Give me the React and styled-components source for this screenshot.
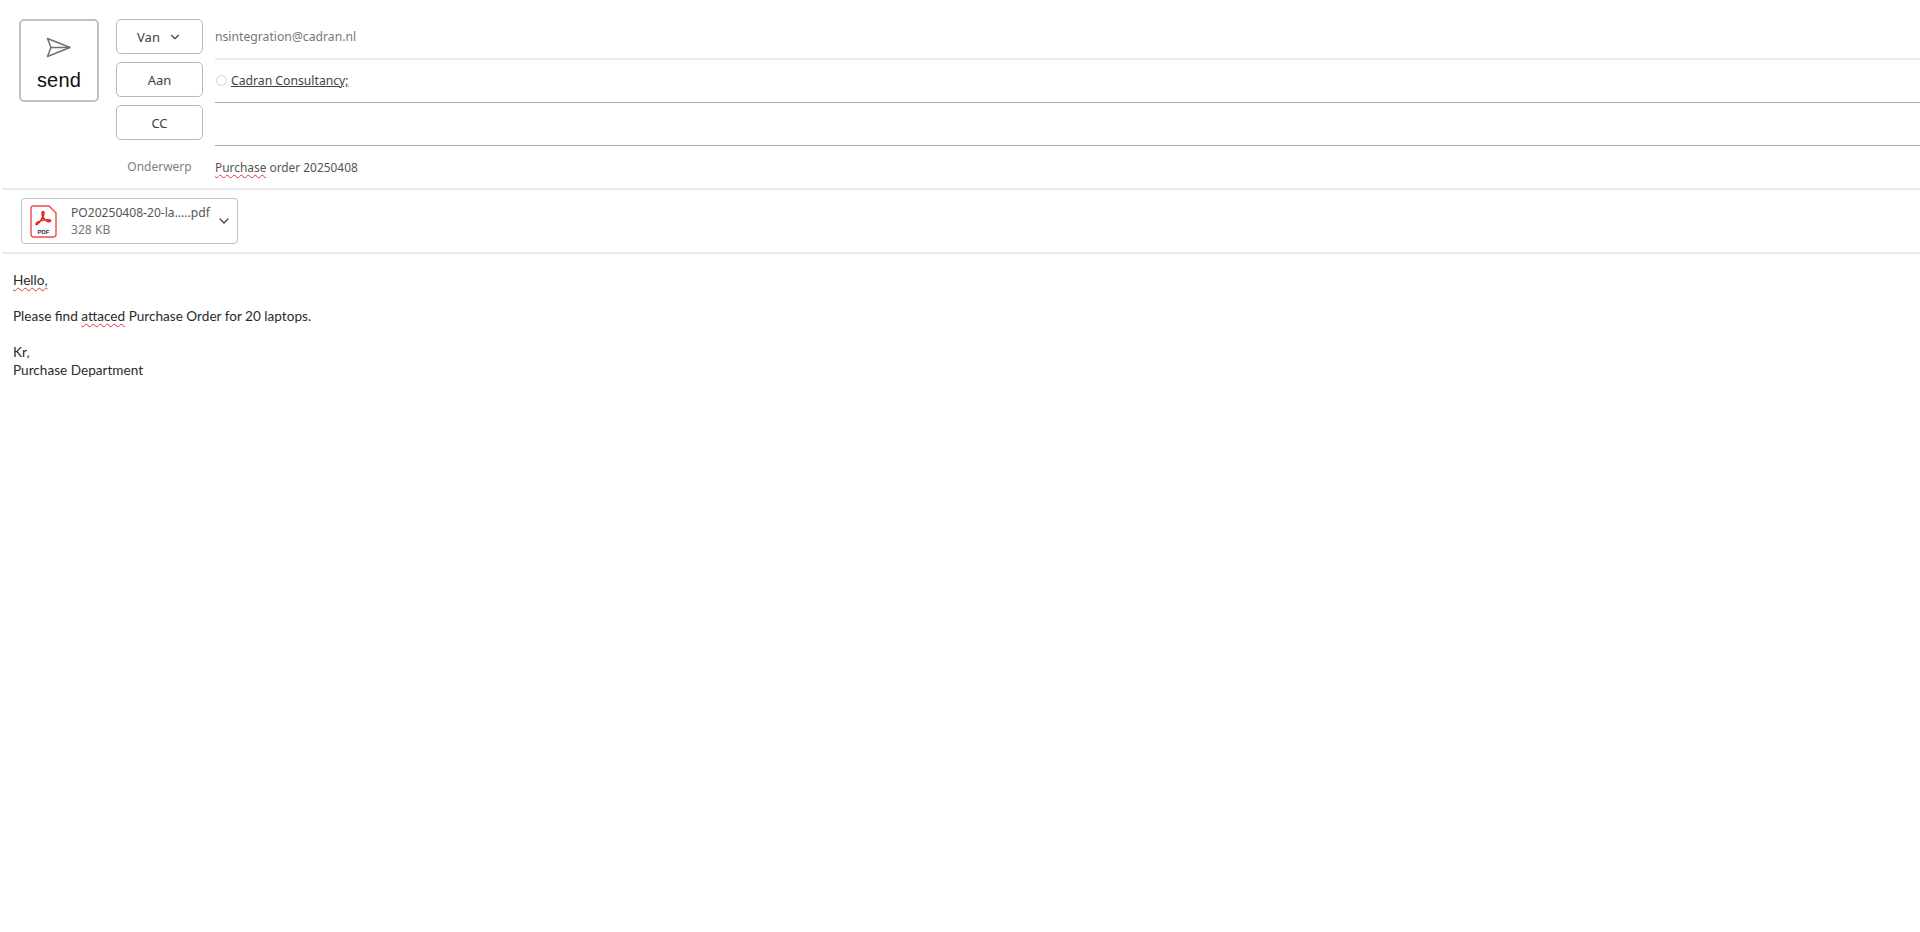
import React from "react";
import styled, { createGlobalStyle } from "styled-components";
import { ChevronDown } from "lucide-react";

const GlobalStyle = createGlobalStyle`
  html, body {
    margin: 0;
    padding: 0;
    background: #fff;
    font-family: "Noto Sans", "Liberation Sans", sans-serif;
    overflow: hidden;
  }
`;

const Page = styled.div`
  width: 1920px;
  height: 932px;
  background: #fff;
  padding-left: 2px;
  box-sizing: border-box;
`;

const Header = styled.div`
  display: flex;
  height: 190px;
  padding: 19px 0 0 17px;
  box-sizing: border-box;
  border-bottom: 2px solid #eaeaea;
`;

const SendButton = styled.div`
  width: 80px;
  height: 83px;
  box-sizing: border-box;
  border: 2px solid #c0c0c0;
  border-radius: 5px;
  display: flex;
  flex-direction: column;
  align-items: center;
  padding-top: 16px;
  margin-right: 17px;
  font-family: "Liberation Sans", sans-serif;
  font-size: 20px;
  line-height: 24px;
  letter-spacing: 0.2px;
  color: #111;
  svg {
    margin-bottom: 9px;
  }
`;

const Fields = styled.div`
  flex: 1;
  display: grid;
  grid-template-columns: 87px 1fr;
  grid-template-rows: 43px 43px 43px 43px;
  column-gap: 12px;
`;

const LabelCell = styled.div`
  display: flex;
  align-items: flex-start;
`;

const FieldButton = styled.div`
  width: 87px;
  height: 35px;
  box-sizing: border-box;
  border: 1.5px solid #b8b8b8;
  border-radius: 5px;
  display: flex;
  align-items: center;
  justify-content: center;
  gap: 7px;
  font-size: 13px;
  color: #404040;
  svg {
    margin-left: 1px;
  }
`;

const SubjectLabel = styled.div`
  width: 87px;
  height: 37px;
  display: flex;
  align-items: center;
  justify-content: center;
  font-size: 12px;
  color: #7f7f7f;
`;

const Value = styled.div`
  display: flex;
  align-items: center;
  gap: 4px;
  font-size: ${(p) => p.$size || 12.2}px;
  padding-bottom: ${(p) => p.$pad ?? 4}px;
  box-sizing: border-box;
  color: ${(p) => p.$color || "#555"};
  border-bottom: ${(p) => (p.$line ? `${p.$weight || 1}px solid ${p.$line}` : "none")};
  height: ${(p) => (p.$line ? "41px" : "37px")};
`;

const Presence = styled.span`
  width: 9px;
  height: 9px;
  border: 1.5px solid #c4d5de;
  border-radius: 50%;
  margin: 0 0 0 1px;
`;

const Recipient = styled.span`
  text-decoration: underline;
  color: #444;
`;

const Misspelled = styled.span`
  text-decoration: underline wavy #e0343c 1px;
  text-underline-offset: 2px;
`;

const AttachmentBar = styled.div`
  height: 64px;
  padding: 8px 0 0 19px;
  box-sizing: border-box;
  border-bottom: 2px solid #eaeaea;
`;

const Attachment = styled.div`
  width: 217px;
  height: 46px;
  box-sizing: border-box;
  border: 1.5px solid #c0c0c0;
  border-radius: 4px;
  display: flex;
  align-items: center;
  padding: 0 5px 0 8px;
`;

const FileInfo = styled.div`
  flex: 1;
  margin-left: 14px;
  font-size: 12.1px;
  line-height: 17px;
  color: #555;
`;

const FileSize = styled.div`
  color: #777;
`;

const Body = styled.div`
  padding: 17px 0 0 11px;
  font-family: "Lato", "Noto Sans", sans-serif;
  font-size: 13.6px;
  line-height: 18px;
  color: #2b2b2b;
`;

const Line = styled.p`
  margin: 0 0 ${(p) => p.$gap || 0}px;
`;

const SendIcon = () => (
  <svg width="26" height="22" viewBox="0 0 26 22" fill="none" stroke="#707070" strokeWidth="1.5" strokeLinejoin="round">
    <path d="M1.5 1.5 L24 10.5 L1.5 19.5 L5 10.5 Z" />
    <path d="M5 10.5 H24" />
  </svg>
);

const PdfIcon = () => (
  <svg width="27" height="33" viewBox="0 0 27 33" fill="none">
    <path d="M3 1 H19 L26 8 V29.5 A2.5 2.5 0 0 1 23.5 32 H3.5 A2.5 2.5 0 0 1 1 29.5 V3 A2 2 0 0 1 3 1 Z" fill="#fff" stroke="#ee4b45" strokeWidth="1.4" />
    <path d="M13 6.5 C11.6 6.5 11.8 9.5 13 12 C14 14 15.5 15.6 17.5 16.4 C20 17.2 21.5 15.6 20 15 C17.5 14.2 11 15 7.5 17.2 C5.2 18.8 6 20.5 7.8 19 C9.6 17.4 12.2 13.5 13.6 10 C14.4 8 14 6.5 13 6.5 Z" stroke="#e3241c" strokeWidth="1.6" />
    <text x="13.5" y="28.5" textAnchor="middle" fontSize="6" fontWeight="700" fontFamily="Liberation Sans, sans-serif" fill="#333">PDF</text>
  </svg>
);

export default function App() {
  return (
    <Page>
      <GlobalStyle />
      <Header>
        <SendButton>
          <SendIcon />
          send
        </SendButton>
        <Fields>
          <LabelCell>
            <FieldButton>
              Van <ChevronDown size={14} strokeWidth={2} />
            </FieldButton>
          </LabelCell>
          <Value $line="#ececec" $weight={2} $color="#777" $pad={5}>nsintegration@cadran.nl</Value>
          <LabelCell>
            <FieldButton>Aan</FieldButton>
          </LabelCell>
          <Value $line="#aaaaaa" $pad={3}>
            <Presence />
            <Recipient>Cadran Consultancy;</Recipient>
          </Value>
          <LabelCell>
            <FieldButton>CC</FieldButton>
          </LabelCell>
          <Value $line="#aaaaaa" />
          <LabelCell>
            <SubjectLabel>Onderwerp</SubjectLabel>
          </LabelCell>
          <Value $pad={0} $size={11.9}>
            <span>
              <Misspelled>Purchase</Misspelled> order 20250408
            </span>
          </Value>
        </Fields>
      </Header>
      <AttachmentBar>
        <Attachment>
          <PdfIcon />
          <FileInfo>
            PO20250408-20-la.....pdf
            <FileSize>328 KB</FileSize>
          </FileInfo>
          <ChevronDown size={16} strokeWidth={2} color="#444" />
        </Attachment>
      </AttachmentBar>
      <Body>
        <Line $gap={18}>
          <Misspelled>Hello,</Misspelled>
        </Line>
        <Line $gap={18}>
          Please find <Misspelled>attaced</Misspelled> Purchase Order for 20 laptops.
        </Line>
        <Line>Kr,</Line>
        <Line>Purchase Department</Line>
      </Body>
    </Page>
  );
}
